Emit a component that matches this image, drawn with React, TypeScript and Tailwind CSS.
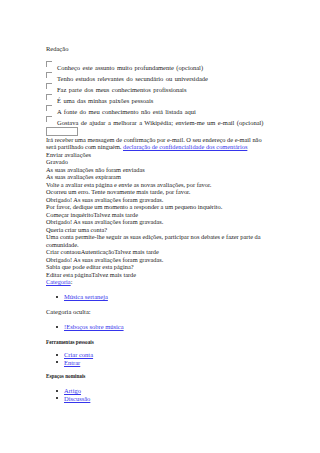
const serif = { fontFamily: '"Liberation Serif", "Times New Roman", serif' }

const checks = [
  "Conheço este assunto muito profundamente (opcional)",
  "Tenho estudos relevantes do secundário ou universidade",
  "Faz parte dos meus conhecimentos profissionais",
  "É uma das minhas paixões pessoais",
  "A fonte do meu conhecimento não está listada aqui",
  "Gostava de ajudar a melhorar a Wikipédia; enviem-me um e-mail (opcional)",
]

const lines = [
  "Enviar avaliações",
  "Gravado",
  "As suas avaliações não foram enviadas",
  "As suas avaliações expiraram",
  "Volte a avaliar esta página e envie as novas avaliações, por favor.",
  "Ocorreu um erro. Tente novamente mais tarde, por favor.",
  "Obrigado! As suas avaliações foram gravadas.",
  "Por favor, dedique um momento a responder a um pequeno inquérito.",
  "Começar inquéritoTalvez mais tarde",
  "Obrigado! As suas avaliações foram gravadas.",
  "Queria criar uma conta?",
  "Uma conta permite-lhe seguir as suas edições, participar nos debates e fazer parte da",
  "comunidade.",
  "Criar contaouAutenticaçãoTalvez mais tarde",
  "Obrigado! As suas avaliações foram gravadas.",
  "Sabia que pode editar esta página?",
  "Editar esta páginaTalvez mais tarde",
]

function Bullet({ children }: { children: React.ReactNode }) {
  return (
    <li className="flex h-[7.5px] items-center">
      <span className="ml-[10px] mr-[6px] h-[2px] w-[2px] rounded-full bg-black" />
      <a className="text-[#3535ec] underline">{children}</a>
    </li>
  )
}

export default function App() {
  return (
    <div
      style={serif}
      className="min-h-[453px] whitespace-nowrap bg-white pl-[46px] pt-[45px] text-[6.5px] leading-[7.5px] text-[#222]"
    >
      <p>Redação</p>

      <div className="mt-[9px]">
        {checks.map((c) => (
          <div key={c} className="flex h-[11px] items-start">
            <span className="mt-[-1px] h-[6px] w-[6px] shrink-0 border-l border-t border-[#999]" />
            <span className="ml-[5px] mt-[2.5px] [word-spacing:0.8px]">{c}</span>
          </div>
        ))}
      </div>

      <div className="mt-[-1px] h-[9px] w-[32px] border border-[#999]" />

      <div className="text-[6.35px]">
        <p>Irá receber uma mensagem de confirmação por e-mail. O seu endereço de e-mail não</p>
        <p>
          será partilhado com ninguém.{" "}
          <a className="text-[#3535ec] underline">declaração de confidencialidade dos comentários</a>
        </p>
        {lines.map((l, i) => (
          <p key={i}>{l}</p>
        ))}
        <p>
          <a className="text-[#3535ec] underline">Categoria</a>:
        </p>
      </div>

      <ul className="mt-[7.5px]">
        <Bullet>Música sertaneja</Bullet>
      </ul>

      <p className="mt-[7.5px]">Categoria oculta:</p>

      <ul className="mt-[7.5px]">
        <Bullet>!Esboços sobre música</Bullet>
      </ul>

      <p className="mt-[8px] h-[6px] text-[5.2px] font-bold leading-[6px]">Ferramentas pessoais</p>

      <ul className="mt-[6.5px]">
        <Bullet>Criar conta</Bullet>
        <Bullet>Entrar</Bullet>
      </ul>

      <p className="mt-[7px] h-[6px] text-[5.2px] font-bold leading-[6px]">Espaços nominais</p>

      <ul className="mt-[8px]">
        <Bullet>Artigo</Bullet>
        <Bullet>Discussão</Bullet>
      </ul>
    </div>
  )
}
